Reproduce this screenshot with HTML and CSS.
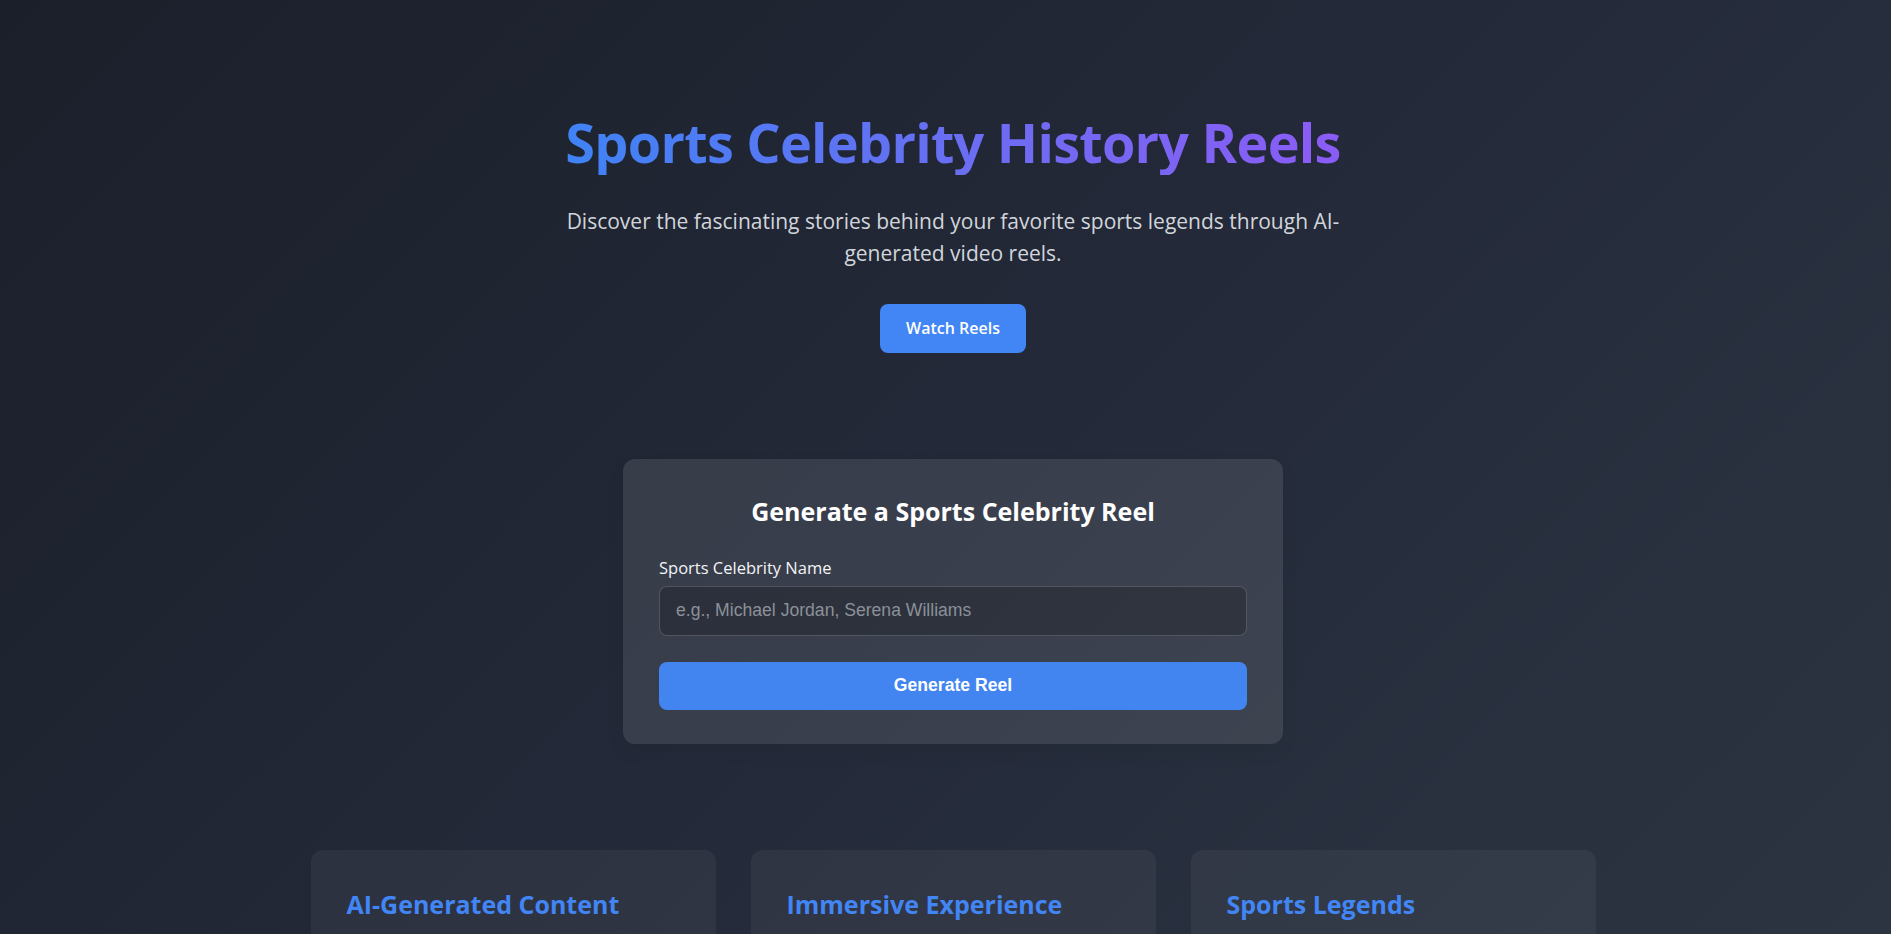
FILE: index.html
```html
<!DOCTYPE html>
<html lang="en">
<head>
<meta charset="utf-8">
<title>Sports Celebrity History Reels</title>
<link rel="stylesheet" href="styles.css">
</head>
<body>
<div class="page">
  <header class="hero">
    <h1 class="hero-title">Sports Celebrity History Reels</h1>
    <p class="hero-sub">Discover the fascinating stories behind your favorite sports legends through AI-generated video reels.</p>
    <button class="btn-watch" type="button">Watch Reels</button>
  </header>

  <section class="gen-card">
    <h2 class="gen-title">Generate a Sports Celebrity Reel</h2>
    <form class="gen-form">
      <label class="gen-label" for="celeb">Sports Celebrity Name</label>
      <input class="gen-input" id="celeb" type="text" placeholder="e.g., Michael Jordan, Serena Williams">
      <button class="btn-generate" type="button">Generate Reel</button>
    </form>
  </section>

  <section class="features">
    <article class="feature">
      <h3 class="feature-title">AI-Generated Content</h3>
      <p class="feature-text">Our AI crafts compelling short reels that highlight the defining moments of each athlete's career.</p>
    </article>
    <article class="feature">
      <h3 class="feature-title">Immersive Experience</h3>
      <p class="feature-text">Relive iconic games, records and comebacks through vivid narration and visuals.</p>
    </article>
    <article class="feature">
      <h3 class="feature-title">Sports Legends</h3>
      <p class="feature-text">Explore the histories of legends from basketball, tennis, football and beyond.</p>
    </article>
  </section>
</div>
</body>
</html>
```

FILE: styles.css
```css
* { box-sizing: border-box; }

html {
  background: linear-gradient(135deg, #1b1f2a 0%, #232938 50%, #2c3442 100%) fixed;
}

body {
  margin: 0;
  min-height: 100vh;
  font-family: "Open Sans", "Noto Sans", sans-serif;
  color: #ffffff;
}

.page {
  padding: 110px 0 80px 15px;
  display: flex;
  flex-direction: column;
  align-items: center;
}

.hero {
  display: flex;
  flex-direction: column;
  align-items: center;
  text-align: center;
}

.hero-title {
  margin: 0 0 30px;
  font-size: 54px;
  line-height: 1.2;
  font-weight: 700;
  letter-spacing: -0.75px;
  background: linear-gradient(90deg, #3f83f5 0%, #6d6cf2 55%, #8b5cf6 100%);
  -webkit-background-clip: text;
  background-clip: text;
  color: transparent;
}

.hero-sub {
  margin: 0 0 34px;
  max-width: 790px;
  font-size: 21px;
  line-height: 32.5px;
  color: #d1d5db;
}

.btn-watch {
  font-family: inherit;
  font-size: 16px;
  font-weight: 600;
  line-height: 25px;
  padding: 12px 26px;
  border: 0;
  border-radius: 8px;
  background: #4285f4;
  color: #fff;
  cursor: pointer;
}

.gen-card {
  margin-top: 106px;
  width: 660px;
  padding: 36px 36px 34px;
  border-radius: 12px;
  background: rgba(255, 255, 255, 0.1);
  box-shadow: 0 8px 20px rgba(0, 0, 0, 0.05);
}

.gen-title {
  margin: 0 0 29px;
  text-align: center;
  font-size: 25px;
  line-height: 32px;
  font-weight: 700;
}

.gen-form {
  display: flex;
  flex-direction: column;
}

.gen-label {
  font-size: 16.5px;
  line-height: 24px;
  color: #f3f4f6;
  margin-bottom: 6px;
}

.gen-input {
  height: 50px;
  padding: 0 16px;
  border: 1px solid rgba(255, 255, 255, 0.17);
  border-radius: 8px;
  background: rgba(0, 0, 0, 0.2);
  color: #fff;
  font-family: "Liberation Sans", Arial, sans-serif;
  font-size: 17.6px;
  outline: none;
}

.gen-input::placeholder { color: #8b9099; }

.btn-generate {
  margin-top: 26px;
  height: 48px;
  border: 0;
  border-radius: 8px;
  background: #4285f0;
  color: #fff;
  font-family: "Liberation Sans", Arial, sans-serif;
  font-size: 17.6px;
  font-weight: 700;
  cursor: pointer;
}

.features {
  margin-top: 106px;
  display: grid;
  grid-template-columns: repeat(3, 405px);
  gap: 35px;
}

.feature {
  padding: 38px 36px 36px;
  border-radius: 12px;
  background: rgba(255, 255, 255, 0.05);
}

.feature-title {
  margin: 0 0 16px;
  font-size: 25px;
  line-height: 32px;
  font-weight: 700;
  color: #4285f4;
}

.feature-text {
  margin: 0;
  font-size: 16px;
  line-height: 26px;
  color: #d1d5db;
}
```
